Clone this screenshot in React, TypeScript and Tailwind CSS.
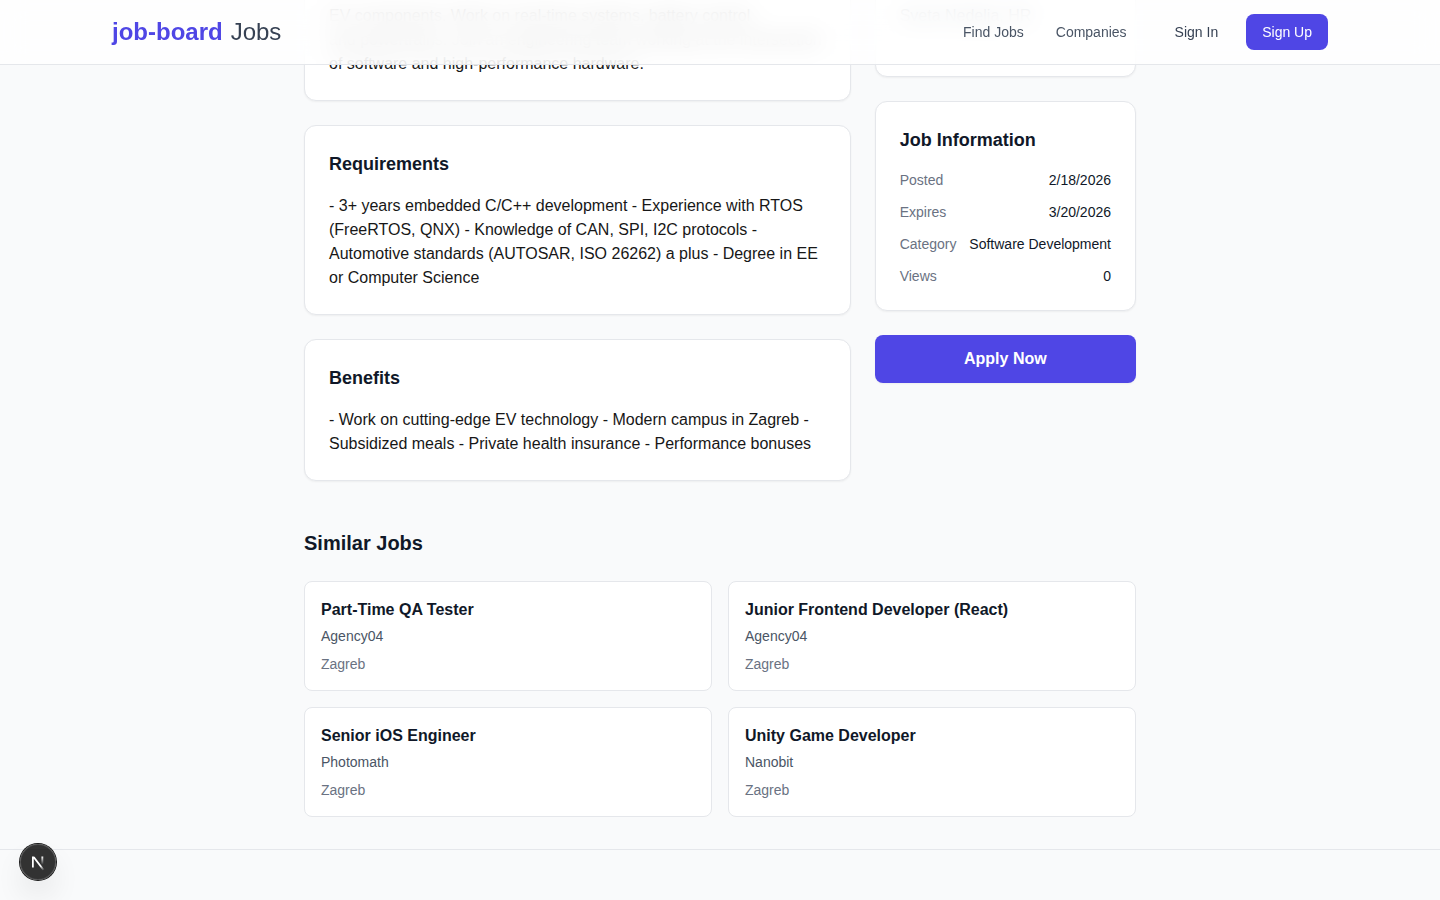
import type { ReactNode } from "react";

const jobInfo = [
  { label: "Posted", value: "2/18/2026" },
  { label: "Expires", value: "3/20/2026" },
  { label: "Category", value: "Software Development" },
  { label: "Views", value: "0" },
];

const similarJobs = [
  { title: "Part-Time QA Tester", company: "Agency04", city: "Zagreb" },
  { title: "Junior Frontend Developer (React)", company: "Agency04", city: "Zagreb" },
  { title: "Senior iOS Engineer", company: "Photomath", city: "Zagreb" },
  { title: "Unity Game Developer", company: "Nanobit", city: "Zagreb" },
];

function Header() {
  return (
    <header className="fixed inset-x-0 top-0 z-10 border-b border-gray-200 bg-white/80 backdrop-blur-md">
      <div className="mx-auto flex h-16 max-w-7xl items-center justify-between px-8">
        <a href="#" className="flex items-center gap-2 text-2xl">
          <span className="font-bold text-[#4f46e5]">job-board</span>
          <span className="text-gray-700">Jobs</span>
        </a>
        <div className="flex items-center gap-8 text-sm">
          <nav className="flex items-center gap-8 text-gray-600">
            <a href="#jobs">Find Jobs</a>
            <a href="#companies">Companies</a>
          </nav>
          <div className="flex items-center gap-3">
            <a href="#sign-in" className="px-4 py-2 text-gray-700">
              Sign In
            </a>
            <a href="#sign-up" className="rounded-lg bg-[#4f46e5] px-4 py-2 text-white">
              Sign Up
            </a>
          </div>
        </div>
      </div>
    </header>
  );
}

function Card({ title, children }: { title: string; children: ReactNode }) {
  return (
    <section className="rounded-xl border border-gray-200 bg-white p-6 shadow-xs">
      <h2 className="mb-4 text-lg font-bold text-gray-900">{title}</h2>
      {children}
    </section>
  );
}

function DevBadge() {
  return (
    <button
      type="button"
      aria-label="Open Next.js Dev Tools"
      className="fixed bottom-5 left-5 z-20 size-9 rounded-full bg-black/80 shadow-[0_0_0_1px_#171717,inset_0_0_0_1px_rgba(255,255,255,0.14),0_16px_32px_-8px_rgba(0,0,0,0.24)]"
    >
      <svg width="36" height="36" viewBox="0 0 36 36" fill="none" aria-hidden="true">
        <defs>
          <linearGradient id="tail" gradientUnits="userSpaceOnUse" x1="9.955" y1="11.1222" x2="15.4778" y2="17.9671">
            <stop stopColor="white" />
            <stop offset="0.604" stopColor="white" stopOpacity="0" />
            <stop offset="1" stopColor="white" stopOpacity="0" />
          </linearGradient>
          <linearGradient id="stem" gradientUnits="userSpaceOnUse" x1="11.8222" y1="1.4" x2="11.791" y2="9.6254">
            <stop stopColor="white" />
            <stop offset="1" stopColor="white" stopOpacity="0" />
          </linearGradient>
          <mask id="corner">
            <rect width="100%" height="100%" fill="white" />
            <rect width="5" height="1.5" fill="black" />
          </mask>
        </defs>
        <g transform="translate(10.5 11)" strokeWidth="1.86">
          <path d="M13.3 15.2 L2.34 1 V12.6" stroke="url(#tail)" mask="url(#corner)" />
          <path d="M11.825 1.5 V13.1" stroke="url(#stem)" />
        </g>
      </svg>
    </button>
  );
}

export default function App() {
  return (
    <div className="flex min-h-screen flex-col overflow-hidden bg-gray-50 font-['Liberation_Sans',Arial,sans-serif] text-[#171717]">
      <Header />
      {/* The detail view opens part-way down, with its top tucked under the header. */}
      <main className="mx-auto -mt-[89px] w-full max-w-4xl px-8 pb-8">
        <div className="grid grid-cols-3 gap-6">
          <div className="col-span-2 flex flex-col gap-6">
            <Card title="Description">
              <p>
                Develop embedded software for electric hypercars and
                <br />
                EV components. Work on real-time systems, battery control
                <br />
                and powertrains. Join an engineering team working at the intersection
                <br />
                of software and high-performance hardware.
              </p>
            </Card>
            <Card title="Requirements">
              <p>
                - 3+ years embedded C/C++ development - Experience with RTOS (FreeRTOS, QNX) -
                Knowledge of CAN, SPI, I2C protocols - Automotive standards (AUTOSAR, ISO 26262) a
                plus - Degree in EE or Computer Science
              </p>
            </Card>
            <Card title="Benefits">
              <p>
                - Work on cutting-edge EV technology - Modern campus in Zagreb - Subsidized meals -
                Private health insurance - Performance bonuses
              </p>
            </Card>
          </div>
          <aside className="flex flex-col gap-6">
            <Card title="About Company">
              <div className="pb-6 text-gray-600">
                <p>Rimac Technology</p>
                <p>Sveta Nedelja, HR</p>
              </div>
            </Card>
            <Card title="Job Information">
              <dl className="flex flex-col gap-3 text-sm">
                {jobInfo.map((row) => (
                  <div key={row.label} className="flex justify-between">
                    <dt className="text-gray-500">{row.label}</dt>
                    <dd className="text-gray-900">{row.value}</dd>
                  </div>
                ))}
              </dl>
            </Card>
            <button
              type="button"
              className="rounded-lg bg-[#4f46e5] px-6 py-3 font-bold text-white shadow-xs"
            >
              Apply Now
            </button>
          </aside>
        </div>

        <section className="mt-12">
          <h2 className="mb-6 text-xl font-bold text-gray-900">Similar Jobs</h2>
          <div className="grid grid-cols-2 gap-4">
            {similarJobs.map((job) => (
              <a
                key={job.title}
                href="#job"
                className="rounded-lg border border-gray-200 bg-white p-4"
              >
                <h3 className="font-bold text-gray-900">{job.title}</h3>
                <p className="mt-1 text-sm text-gray-600">{job.company}</p>
                <p className="mt-2 text-sm text-gray-500">{job.city}</p>
              </a>
            ))}
          </div>
        </section>
      </main>
      <footer className="flex-1 border-t border-gray-200" />
      <DevBadge />
    </div>
  );
}
